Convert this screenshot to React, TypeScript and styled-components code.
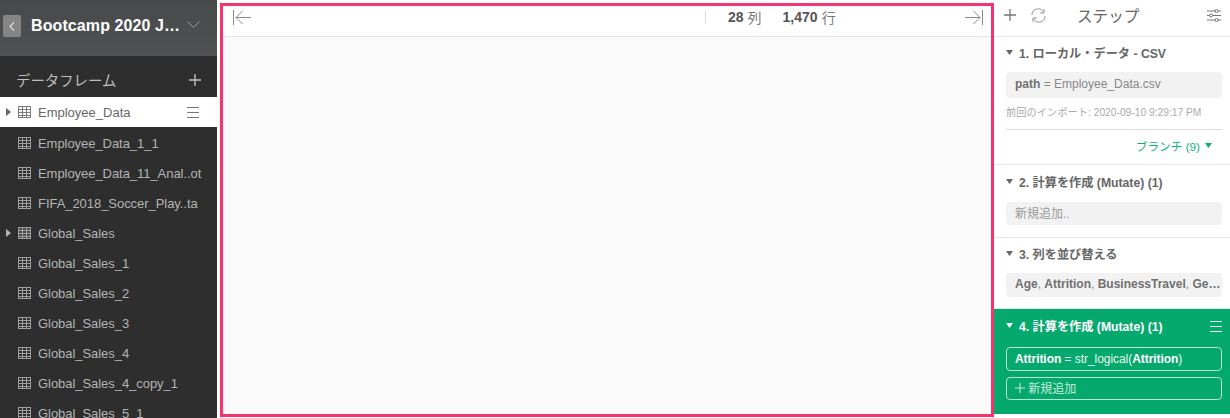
import React from 'react';
import styled, { createGlobalStyle } from 'styled-components';

const GlobalStyle = createGlobalStyle`
    html, body {
        margin: 0;
        padding: 0;
        background: #fff;
    }
    body {
        font-family: "Liberation Sans", "Noto Sans CJK JP", sans-serif;
    }
`;

const TableIcon = ({ dense }: { dense?: boolean }) => (
    <TableGlyph width="13" height="12" viewBox="0 0 13 12" fill="none" stroke="currentColor" strokeWidth="1">
        <rect x="0.5" y="0.5" width="12" height="11" fill={dense ? 'currentColor' : 'none'} fillOpacity={dense ? 0.25 : 0} />
        <path d="M0.5 3.5H12.5M0.5 6.5H12.5M0.5 9.5H12.5M4.5 0.5V11.5M8.5 0.5V11.5" />
    </TableGlyph>
);

const MenuIcon = () => (
    <svg width="12" height="11" viewBox="0 0 12 11" fill="none" stroke="currentColor" strokeWidth="1">
        <path d="M0 0.5H12M0 5.5H12M0 10.5H12" />
    </svg>
);

const PlusIcon = ({ size }: { size: number }) => (
    <svg width={size} height={size} viewBox="0 0 12 12" fill="none" stroke="currentColor" strokeWidth="1.3">
        <path d="M6 0V12M0 6H12" />
    </svg>
);

const Caret = ({ size = 7 }: { size?: number }) => (
    <svg width={size} height={size * 0.72} viewBox="0 0 7 5" fill="currentColor">
        <path d="M0 0H7L3.5 5Z" />
    </svg>
);

const SideCaret = () => (
    <svg width="5" height="8" viewBox="0 0 5 8" fill="currentColor">
        <path d="M0 0L5 4L0 8Z" />
    </svg>
);

const sources = [
    'Employee_Data_1_1',
    'Employee_Data_11_Anal..ot',
    'FIFA_2018_Soccer_Play..ta',
    'Global_Sales',
    'Global_Sales_1',
    'Global_Sales_2',
    'Global_Sales_3',
    'Global_Sales_4',
    'Global_Sales_4_copy_1',
    'Global_Sales_5_1',
];

export default function App() {
    return (
        <Page>
            <GlobalStyle />
            <Sidebar>
                <ProjectHeader>
                    <BackButton>
                        <svg width="6" height="9" viewBox="0 0 6 9" fill="none" stroke="currentColor" strokeWidth="1.2">
                            <path d="M5 0.5L1 4.5L5 8.5" />
                        </svg>
                    </BackButton>
                    <ProjectName>Bootcamp 2020 J…</ProjectName>
                    <ProjectChevron>
                        <svg width="13" height="7" viewBox="0 0 13 7" fill="none" stroke="#9a9b9d" strokeWidth="1">
                            <path d="M0.5 0.5L6.5 6.5L12.5 0.5" />
                        </svg>
                    </ProjectChevron>
                </ProjectHeader>
                <FrameHeader>
                    <FrameTitle>データフレーム</FrameTitle>
                    <FramePlus><PlusIcon size={12} /></FramePlus>
                </FrameHeader>
                <ActiveRow>
                    <RowCaret><SideCaret /></RowCaret>
                    <TableIcon />
                    <RowName>Employee_Data</RowName>
                    <RowMenu><MenuIcon /></RowMenu>
                </ActiveRow>
                {sources.map((name) => (
                    <Row key={name}>
                        <RowCaret>{name === 'Global_Sales' && <SideCaret />}</RowCaret>
                        <TableIcon dense={name === 'Global_Sales'} />
                        <RowName>{name}</RowName>
                    </Row>
                ))}
            </Sidebar>
            <Main>
                <MainBar>
                    <ArrowSlot>
                        <svg width="18" height="15" viewBox="0 0 18 15" fill="none" stroke="#8a8a8a" strokeWidth="1">
                            <path d="M0.5 0V15M18 7.5H3M9.5 1L3 7.5L9.5 14" />
                        </svg>
                    </ArrowSlot>
                    <Summary>
                        <Count>28</Count><Unit>列</Unit>
                        <Count $gap>1,470</Count><Unit>行</Unit>
                    </Summary>
                    <ArrowSlot>
                        <svg width="18" height="15" viewBox="0 0 18 15" fill="none" stroke="#8a8a8a" strokeWidth="1">
                            <path d="M17.5 0V15M0 7.5H15M8.5 1L15 7.5L8.5 14" />
                        </svg>
                    </ArrowSlot>
                </MainBar>
                <MainBody />
            </Main>
            <Steps>
                <StepsHeader>
                    <StepsPlus><PlusIcon size={12} /></StepsPlus>
                    <svg width="15" height="15" viewBox="0 0 15 15" fill="none" stroke="#999" strokeWidth="1">
                        <path d="M1 7A6 6 0 0 1 12.5 4.5M14 8A6 6 0 0 1 2.5 10.5" />
                        <path d="M13 1V5H9M2 14V10H6" />
                    </svg>
                    <StepsTitle>ステップ</StepsTitle>
                    <svg width="14" height="13" viewBox="0 0 14 13" fill="none" stroke="#777" strokeWidth="1">
                        <path d="M0 2H14M0 6.5H14M0 11H14" />
                        <circle cx="9.5" cy="2" r="1.5" fill="#fff" />
                        <circle cx="4" cy="6.5" r="1.5" fill="#fff" />
                        <circle cx="9.5" cy="11" r="1.5" fill="#fff" />
                    </svg>
                </StepsHeader>
                <Step $height={128}>
                    <StepTitle $height={35}><Caret /><span>1. ローカル・データ - CSV</span></StepTitle>
                    <Chip $height={26}><b>path</b>&nbsp;= Employee_Data.csv</Chip>
                    <Stamp>前回のインポート: 2020-09-10 9:29:17 PM</Stamp>
                    <Branch>
                        <BranchLabel>ブランチ (9)<Caret /></BranchLabel>
                    </Branch>
                </Step>
                <Step $height={73}>
                    <StepTitle $height={37}><Caret /><span>2. 計算を作成 (Mutate) (1)</span></StepTitle>
                    <Chip $height={23}><Placeholder>新規追加..</Placeholder></Chip>
                </Step>
                <Step $height={71}>
                    <StepTitle $height={35}><Caret /><span>3. 列を並び替える</span></StepTitle>
                    <Chip $height={24}>
                        <span><b>Age</b>, <b>Attrition</b>, <b>BusinessTravel</b>, <b>Ge…</b></span>
                    </Chip>
                </Step>
                <ActiveStep>
                    <StepTitle $height={38}>
                        <Caret />
                        <span>4. 計算を作成 (Mutate) (1)</span>
                        <StepMenu><MenuIcon /></StepMenu>
                    </StepTitle>
                    <OutlineChip><b>Attrition</b>&nbsp;= str_logical(<b>Attrition</b>)</OutlineChip>
                    <OutlineChip $add><PlusIcon size={10} />&nbsp;新規追加</OutlineChip>
                </ActiveStep>
            </Steps>
        </Page>
    );
}

const Page = styled.div`
    display: flex;
    width: 1230px;
    height: 418px;
    overflow: hidden;
    background: #fff;
`;
const Sidebar = styled.aside`
    flex: none;
    width: 217px;
    height: 418px;
    overflow: hidden;
    background: #2d2e2d;
`;
const ProjectHeader = styled.div`
    display: flex;
    align-items: center;
    height: 56px;
    box-sizing: border-box;
    padding: 0 17px 4px 3px;
    background: linear-gradient(#48494b, #505153);
`;
const BackButton = styled.div`
    display: flex;
    align-items: center;
    justify-content: center;
    width: 18px;
    height: 22px;
    border-radius: 2px;
    color: #ddd;
    background: #858585;
`;
const ProjectName = styled.div`
    flex: 1;
    margin-left: 10px;
    font-size: 16px;
    font-weight: 700;
    letter-spacing: 0.1px;
    color: #fff;
    white-space: nowrap;
`;
const ProjectChevron = styled.span`
    display: flex;
    margin-bottom: 4px;
`;
const FrameHeader = styled.div`
    display: flex;
    align-items: center;
    justify-content: space-between;
    height: 41px;
    box-sizing: border-box;
    padding: 6px 16px 0 16px;
`;
const FrameTitle = styled.div`
    font-size: 14.4px;
    color: #bdbdbd;
`;
const FramePlus = styled.div`
    display: flex;
    color: #c8c8c8;
`;
const TableGlyph = styled.svg`
    flex: none;
    opacity: 0.85;
`;
const Row = styled.div`
    display: flex;
    align-items: center;
    height: 30px;
    box-sizing: border-box;
    padding-top: 2px;
    font-size: 13px;
    letter-spacing: -0.05px;
    color: #b4b4b4;
`;
const ActiveRow = styled(Row)`
    padding-top: 0;
    letter-spacing: 0;
    background: #fff;
    color: #666;
`;
const RowCaret = styled.span`
    display: flex;
    flex: none;
    width: 18px;
    padding-left: 6px;
    box-sizing: border-box;
`;
const RowName = styled.span`
    margin-left: 7px;
    white-space: nowrap;
`;
const RowMenu = styled.span`
    display: flex;
    margin-left: auto;
    margin-right: 18px;
    color: #777;
`;
const Main = styled.main`
    display: flex;
    flex-direction: column;
    flex: none;
    width: 774px;
    height: 414px;
    box-sizing: border-box;
    margin: 3px 0 0 3px;
    border: 3px solid #f6336f;
    background: #fff;
`;
const MainBar = styled.div`
    display: flex;
    align-items: center;
    justify-content: space-between;
    height: 31px;
    flex: none;
    padding: 0 8px 8px 10px;
    box-sizing: border-box;
    border-bottom: 1px solid #e6e6e6;
`;
const ArrowSlot = styled.span`
    display: flex;
`;
const Summary = styled.div`
    display: flex;
    align-items: center;
    height: 14px;
    margin-left: 454px;
    margin-right: auto;
    padding-left: 22px;
    border-left: 1px solid #ddd;
    font-size: 14px;
    color: #666;
`;
const Count = styled.b<{ $gap?: boolean }>`
    margin-left: ${(p) => (p.$gap ? '21px' : '0')};
    color: #555;
`;
const Unit = styled.span`
    margin-left: 4px;
    color: #777;
`;
const MainBody = styled.div`
    flex: 1;
    background: #fafafa;
`;
const Steps = styled.section`
    flex: none;
    width: 236px;
    height: 418px;
    overflow: hidden;
`;
const StepsHeader = styled.div`
    display: flex;
    align-items: center;
    height: 37px;
    box-sizing: border-box;
    padding: 0 9px 6px 10px;
    border-bottom: 1px solid #e6e6e6;
`;
const StepsPlus = styled.span`
    display: flex;
    margin-right: 15px;
    color: #777;
`;
const StepsTitle = styled.span`
    flex: 1;
    margin-left: 31px;
    font-size: 15.6px;
    color: #666;
`;
const Step = styled.div<{ $height: number }>`
    height: ${(p) => p.$height}px;
    box-sizing: border-box;
    padding: 0 8px 0 12px;
    border-bottom: 1px solid #e6e6e6;
    color: #666;
`;
const StepTitle = styled.div<{ $height: number }>`
    display: flex;
    align-items: center;
    gap: 6px;
    height: ${(p) => p.$height}px;
    box-sizing: border-box;
    padding-bottom: 4px;
    font-size: 12.2px;
    font-weight: 700;
`;
const StepMenu = styled.span`
    display: flex;
    margin-left: auto;
    color: #e4f5ee;
`;
const Chip = styled.div<{ $height: number }>`
    display: flex;
    align-items: center;
    height: ${(p) => p.$height}px;
    box-sizing: border-box;
    padding: 0 4px 2px 9px;
    border-radius: 4px;
    background: #f2f2f2;
    font-size: 12px;
    color: #888;
    white-space: nowrap;
    b {
        color: #707070;
    }
`;
const Placeholder = styled.span`
    color: #999;
`;
const Stamp = styled.div`
    margin-top: 8px;
    padding-bottom: 10px;
    border-bottom: 1px solid #ddd;
    font-size: 10.25px;
    line-height: 13px;
    color: #aaa;
    white-space: nowrap;
`;
const Branch = styled.div`
    display: flex;
    justify-content: flex-end;
    padding: 7px 10px 0 0;
`;
const BranchLabel = styled.span`
    display: flex;
    align-items: center;
    gap: 5px;
    font-size: 11.7px;
    color: #10b07a;
`;
const ActiveStep = styled.div`
    height: 105px;
    box-sizing: border-box;
    padding: 0 8px 0 12px;
    background: #05a86d;
    color: #fff;
`;
const OutlineChip = styled.div<{ $add?: boolean }>`
    display: flex;
    align-items: center;
    height: ${(p) => (p.$add ? '23px' : '24px')};
    box-sizing: border-box;
    margin-top: ${(p) => (p.$add ? '6px' : '0')};
    padding: 0 8px ${(p) => (p.$add ? '2px' : '0')};
    border: 1px solid #b5e5d3;
    border-radius: 4px;
    font-size: 12px;
    letter-spacing: -0.05px;
    color: ${(p) => (p.$add ? '#c8ebdd' : '#e8f7f1')};
    white-space: nowrap;
    b {
        color: #fff;
    }
`;
